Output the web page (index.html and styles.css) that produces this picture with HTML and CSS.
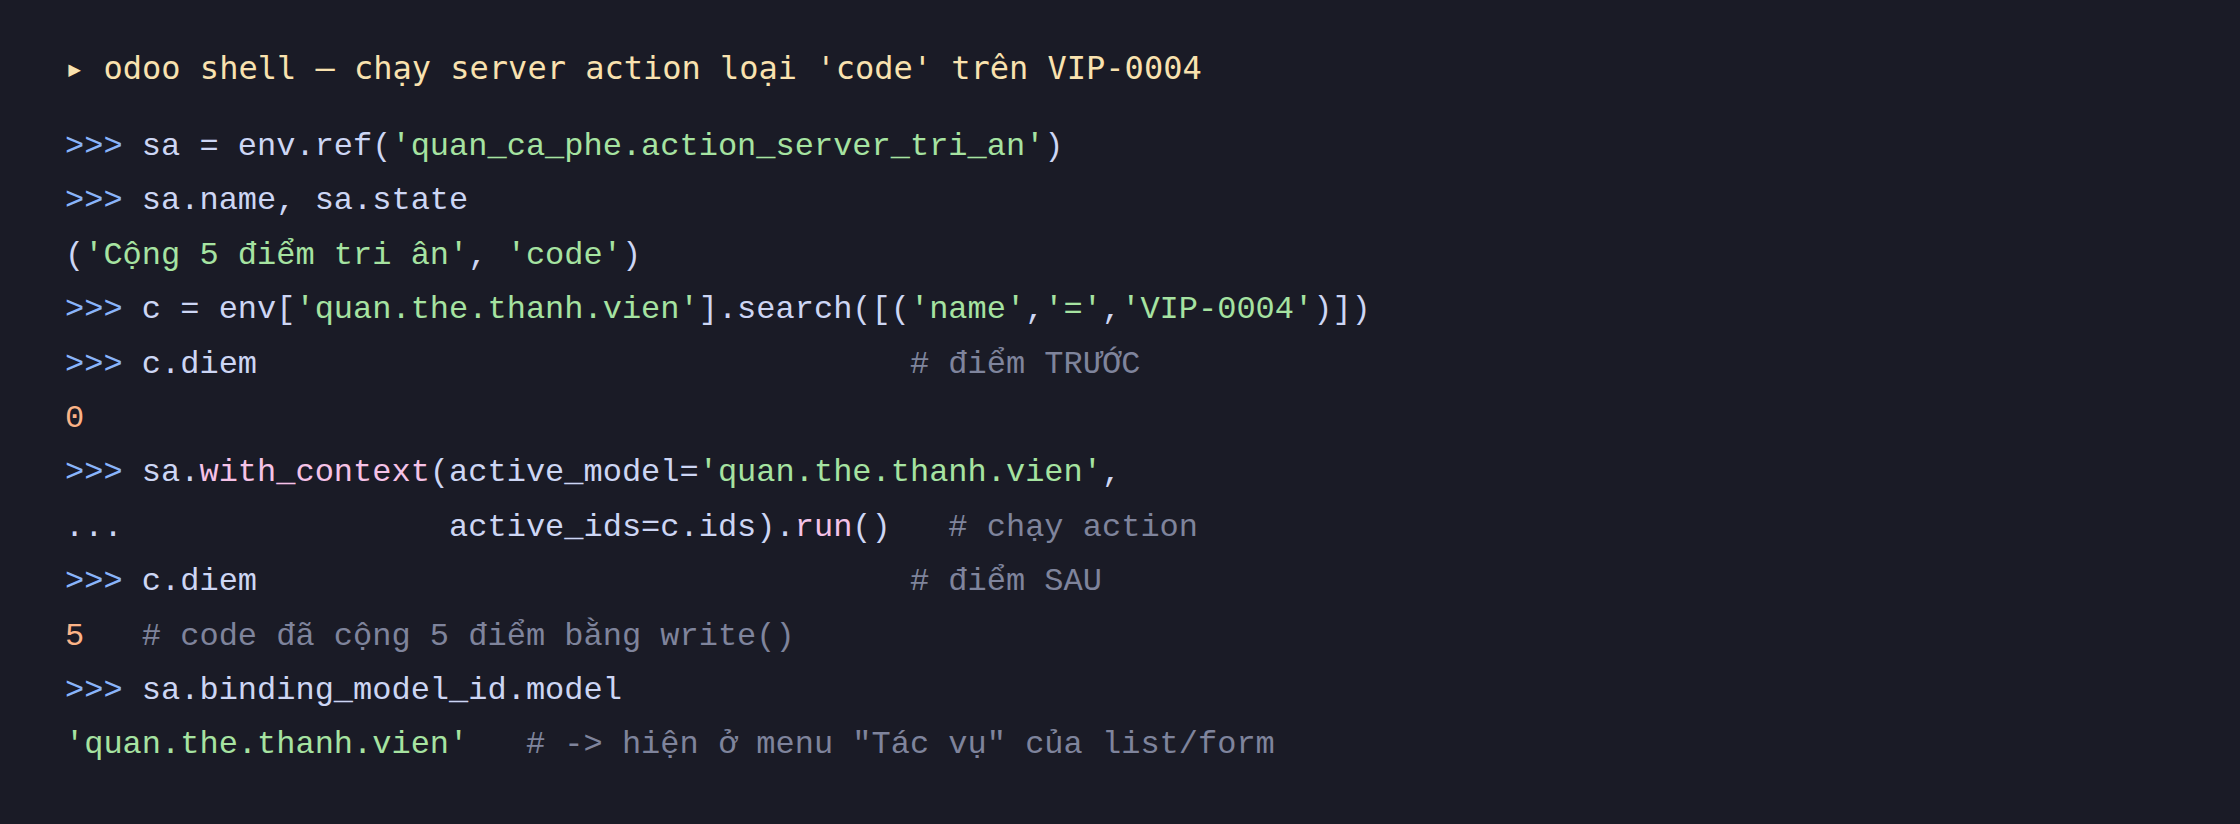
FILE: index.html
```html
<!DOCTYPE html>
<html lang="vi">
<head>
<meta charset="utf-8">
<title>odoo shell</title>
<link rel="stylesheet" href="styles.css">
</head>
<body>
<main class="term">
<div class="title"><span class="arrow">▸</span> odoo shell — chạy server action loại 'code' trên VIP-0004</div>
<pre class="code"><span class="p">&gt;&gt;&gt;</span> sa = env.ref(<span class="s">'quan_ca_phe.action_server_tri_an'</span>)
<span class="p">&gt;&gt;&gt;</span> sa.name, sa.state
(<span class="s">'Cộng 5 điểm tri ân'</span>, <span class="s">'code'</span>)
<span class="p">&gt;&gt;&gt;</span> c = env[<span class="s">'quan.the.thanh.vien'</span>].search([(<span class="s">'name'</span>,<span class="s">'='</span>,<span class="s">'VIP-0004'</span>)])
<span class="p">&gt;&gt;&gt;</span> c.diem                                  <span class="c"># điểm TRƯỚC</span>
<span class="n">0</span>
<span class="p">&gt;&gt;&gt;</span> sa.<span class="f">with_context</span>(active_model=<span class="s">'quan.the.thanh.vien'</span>,
...                 active_ids=c.ids).<span class="f">run</span>()   <span class="c"># chạy action</span>
<span class="p">&gt;&gt;&gt;</span> c.diem                                  <span class="c"># điểm SAU</span>
<span class="n">5</span>   <span class="c"># code đã cộng 5 điểm bằng write()</span>
<span class="p">&gt;&gt;&gt;</span> sa.binding_model_id.model
<span class="s">'quan.the.thanh.vien'</span>   <span class="c"># -&gt; hiện ở menu "Tác vụ" của list/form</span></pre>
</main>
</body>
</html>
```
FILE: styles.css
```css
html, body {
  margin: 0;
  padding: 0;
  background: #1a1b26;
}
body {
  width: 2240px;
  height: 824px;
  overflow: hidden;
}
.term {
  padding: 41px 0 0 65px;
}
.title {
  font-family: "DejaVu Sans Mono", monospace;
  font-size: 32px;
  line-height: 54.4px;
  color: #f9e2af;
  white-space: pre;
}
.code {
  margin: 24.6px 0 0 0;
  font-family: "Liberation Mono", monospace;
  font-size: 32px;
  line-height: 54.4px;
  color: #cdd6f4;
}
.p { color: #89b4fa; }
.s { color: #a6e3a1; }
.c { color: #7f849c; }
.n { color: #fab387; }
.f { color: #f5c2e7; }
```
